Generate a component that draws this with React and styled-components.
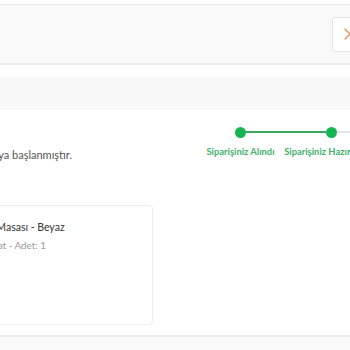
import React from 'react';
import styled, { createGlobalStyle } from 'styled-components';

const GlobalStyle = createGlobalStyle`
  html, body {
    margin: 0;
    padding: 0;
    background: #fff;
    overflow: hidden;
  }
  body {
    font-family: Lato, "Open Sans", sans-serif;
    color: #333;
  }
`;

const steps = [
  { label: 'Siparişiniz Alındı', done: true },
  { label: 'Siparişiniz Hazırlanıyor', done: true },
  { label: 'Kargoya Verildi', done: false },
  { label: 'Teslim Edildi', done: false },
];

export default function App() {
  return (
    <>
      <GlobalStyle />
      <Page>
        <Header>
          <CloseButton aria-label="Kapat">
            <svg width="12" height="12" viewBox="0 0 12 12">
              <path d="M1 1 L11 11 M11 1 L1 11" stroke="#e8935b" strokeWidth="1.4" strokeLinecap="round" />
            </svg>
          </CloseButton>
        </Header>
        <SubBar />
        <Content>
          <StatusRow>
            <StatusText>Siparişiniz hazırlanmaya başlanmıştır.</StatusText>
            <Stepper>
              {steps.map((s, i) => (
                <Step key={s.label}>
                  <Track>
                    <Half $visible={i > 0} $done={s.done} />
                    <Dot $done={s.done} />
                    <Half $visible={i < steps.length - 1} $done={steps[i + 1] && steps[i + 1].done} />
                  </Track>
                  <StepLabel $done={s.done}>{s.label}</StepLabel>
                </Step>
              ))}
            </Stepper>
          </StatusRow>
          <ProductCard>
            <Thumb />
            <ProductInfo>
              <ProductName>Çalışma Masası - Beyaz</ProductName>
              <ProductMeta>Sepet Fiyat - Adet: 1</ProductMeta>
            </ProductInfo>
          </ProductCard>
        </Content>
        <Footer />
      </Page>
    </>
  );
}

const Page = styled.div`
  width: 900px;
  margin-left: -220px;
  padding-top: 4px;
`;

const Header = styled.div`
  height: 58px;
  background: #f9f9f9;
  border-top: 1px solid #ececec;
  border-bottom: 2px solid #ececec;
  display: flex;
  align-items: center;
  padding-left: 552px;
`;

const CloseButton = styled.div`
  width: 36px;
  height: 35px;
  box-sizing: border-box;
  background: #fff;
  border: 1px solid #e6e6e6;
  border-radius: 3px;
  display: flex;
  align-items: center;
  justify-content: center;
`;

const SubBar = styled.div`
  margin-top: 12px;
  height: 33px;
  background: #f8f8f8;
`;

const Content = styled.div`
  padding-top: 16px;
`;

const StatusRow = styled.div`
  display: flex;
  align-items: flex-start;
  height: 36px;
`;

const StatusText = styled.div`
  flex: 0 0 292px;
  padding-top: 22px;
  text-align: right;
  font-size: 11px;
  line-height: 14px;
  color: #555;
`;

const Stepper = styled.div`
  display: flex;
  flex: 0 0 auto;
  margin-left: 123px;
`;

const Step = styled.div`
  width: 91px;
  display: flex;
  flex-direction: column;
  align-items: center;
`;

const Track = styled.div`
  width: 100%;
  height: 12px;
  display: flex;
  align-items: center;
`;

const Half = styled.div`
  flex: 1;
  height: 2px;
  background: ${p => (p.$visible ? (p.$done ? '#3aa75c' : '#e4e4e4') : 'transparent')};
`;

const Dot = styled.div`
  width: 11px;
  height: 11px;
  border-radius: 50%;
  flex: 0 0 auto;
  background: ${p => (p.$done ? '#16b553' : '#e4e4e4')};
`;

const StepLabel = styled.div`
  margin-top: 8px;
  font-size: 9.4px;
  font-weight: 700;
  white-space: nowrap;
  color: ${p => (p.$done ? '#45b16a' : '#aaa')};
`;

const ProductCard = styled.div`
  margin-top: 43px;
  margin-left: 65px;
  width: 308px;
  height: 120px;
  box-sizing: border-box;
  border: 1px solid #ededed;
  border-radius: 4px;
  background: #fff;
  display: flex;
  padding: 15px 16px;
  gap: 16px;
`;

const Thumb = styled.div`
  width: 80px;
  height: 80px;
  background: #f3f3f3;
`;

const ProductInfo = styled.div`
  display: flex;
  flex-direction: column;
  gap: 6px;
`;

const ProductName = styled.div`
  font-size: 10.5px;
  color: #333;
`;

const ProductMeta = styled.div`
  font-size: 9.8px;
  color: #999;
`;

const Footer = styled.div`
  margin-top: 10px;
  height: 40px;
  background: #f9f9f9;
  border-top: 2px solid #ececec;
`;
